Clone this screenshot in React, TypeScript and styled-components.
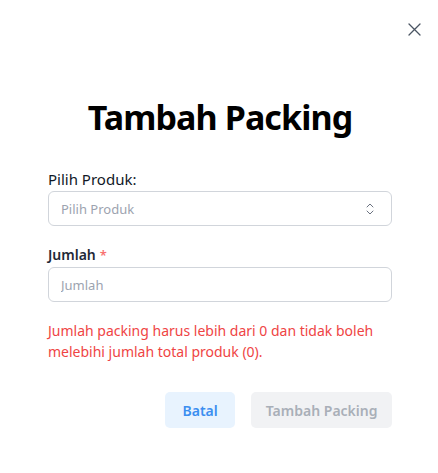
import styled, { createGlobalStyle } from "styled-components";

const GlobalStyle = createGlobalStyle`
  html, body {
    margin: 0;
    padding: 0;
    background: #ffffff;
  }
  body {
    font-family: "Noto Sans", "Open Sans", sans-serif;
    color: #111827;
  }
  * {
    box-sizing: border-box;
  }
`;

const Modal = styled.div`
  position: relative;
  width: 438px;
  height: 473px;
  background: #ffffff;
  padding: 0 46px 0 48px;
  display: flex;
  flex-direction: column;
`;

const CloseButton = styled.button`
  position: absolute;
  top: 21px;
  right: 16px;
  width: 16px;
  height: 16px;
  padding: 0;
  border: none;
  background: transparent;
  color: #4b5563;
  display: flex;
  align-items: center;
  justify-content: center;
  cursor: pointer;
`;

const Title = styled.h2`
  margin: 93px 0 0;
  font-size: 34px;
  line-height: 48px;
  font-weight: 700;
  letter-spacing: -0.9px;
  color: #000000;
  text-align: center;
`;

const Field = styled.div<{ $gap?: number; $top: number }>`
  display: flex;
  flex-direction: column;
  margin-top: ${(props) => props.$top}px;
  gap: ${(props) => props.$gap ?? 2}px;
`;

const FieldLabel = styled.label<{ $bold?: boolean }>`
  font-size: ${(props) => (props.$bold ? "14px" : "15px")};
  font-weight: ${(props) => (props.$bold ? 600 : 400)};
  line-height: 20px;
  color: ${(props) => (props.$bold ? "#1f2937" : "#111827")};
`;

const Required = styled.span`
  color: #f87171;
  font-size: 13px;
  margin-left: 4px;
`;

const SelectBox = styled.div`
  height: 35px;
  border: 1px solid #d1d5db;
  border-radius: 6px;
  padding: 0 17px 0 12px;
  display: flex;
  align-items: center;
  justify-content: space-between;
  font-size: 13px;
  color: #9ca3af;
`;

const TextInput = styled.input`
  height: 35px;
  width: 100%;
  border: 1px solid #d1d5db;
  border-radius: 6px;
  padding: 0 12px;
  font-family: inherit;
  font-size: 13px;
  color: #111827;
  outline: none;
  &::placeholder {
    color: #9ca3af;
  }
`;

const ErrorText = styled.p`
  margin: 18px 0 0;
  font-size: 14px;
  line-height: 21px;
  color: #ef4444;
`;

const Footer = styled.div`
  margin-top: 30px;
  display: flex;
  justify-content: flex-end;
  gap: 16px;
`;

const FooterButton = styled.button<{ $variant: "cancel" | "disabled" }>`
  height: 36px;
  padding: 0 ${(props) => (props.$variant === "cancel" ? "17.5px" : "14.5px")};
  border: none;
  border-radius: 5px;
  font-family: inherit;
  font-size: 14px;
  font-weight: 600;
  background: ${(props) => (props.$variant === "cancel" ? "#e8f3fe" : "#f1f2f4")};
  color: ${(props) => (props.$variant === "cancel" ? "#3b8ef0" : "#a9afb8")};
  cursor: ${(props) => (props.$variant === "cancel" ? "pointer" : "not-allowed")};
`;

export default function App() {
  return (
    <>
      <GlobalStyle />
      <Modal>
        <CloseButton aria-label="Close">
          <svg width="13" height="13" viewBox="0 0 13 13" fill="none" stroke="currentColor" strokeWidth="1.3" strokeLinecap="round">
            <path d="M1 1L12 12M12 1L1 12" />
          </svg>
        </CloseButton>
        <Title>Tambah Packing</Title>
        <Field $top={28}>
          <FieldLabel>Pilih Produk:</FieldLabel>
          <SelectBox>
            <span>Pilih Produk</span>
            <svg width="8" height="12" viewBox="0 0 8 12" fill="none" stroke="#6b7280" strokeWidth="1" strokeLinecap="round" strokeLinejoin="round">
              <path d="M1 4L4 1L7 4" />
              <path d="M1 8L4 11L7 8" />
            </svg>
          </SelectBox>
        </Field>
        <Field $top={19} $gap={2}>
          <FieldLabel $bold>
            Jumlah<Required>*</Required>
          </FieldLabel>
          <TextInput placeholder="Jumlah" />
        </Field>
        <ErrorText>
          Jumlah packing harus lebih dari 0 dan tidak boleh melebihi jumlah total produk (0).
        </ErrorText>
        <Footer>
          <FooterButton $variant="cancel">Batal</FooterButton>
          <FooterButton $variant="disabled" disabled>
            Tambah Packing
          </FooterButton>
        </Footer>
      </Modal>
    </>
  );
}
